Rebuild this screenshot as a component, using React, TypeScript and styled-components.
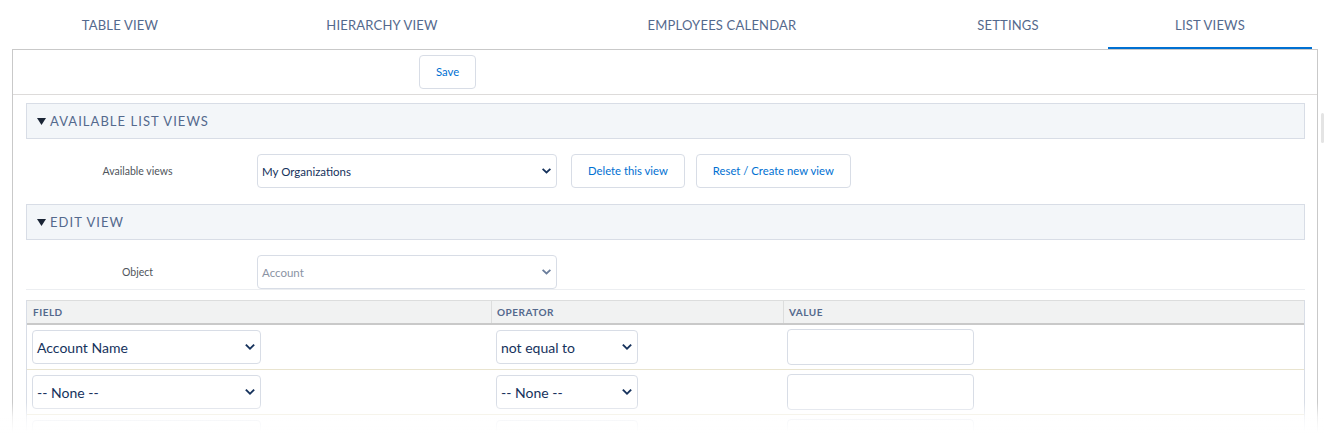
import React from "react";
import styled, { createGlobalStyle } from "styled-components";

const GlobalStyle = createGlobalStyle`
  html, body { margin: 0; padding: 0; overflow: hidden; background: #ffffff; }
  body { font-family: Lato, "Open Sans", "Liberation Sans", sans-serif; }
  * { box-sizing: border-box; }
`;

const Page = styled.div`
  width: 1324px;
  padding: 0 6px 0 12px;
`;

const TabBar = styled.nav`
  display: flex;
  height: 49px;
`;

const Tab = styled.div<{ $w: number; $active?: boolean }>`
  width: ${(p) => p.$w}px;
  height: 49px;
  padding-top: 16px;
  text-align: center;
  font-size: 13px;
  line-height: 18px;
  letter-spacing: 0.2px;
  text-transform: uppercase;
  color: #54698d;
  border-bottom: 2px solid ${(p) => (p.$active ? "#0070d2" : "transparent")};
`;

const Panel = styled.section`
  border: 1px solid #c9c9c9;
  border-bottom: none;
  width: 1306px;
`;

const SaveRow = styled.div`
  display: flex;
  padding: 5px 0 5px 406px;
  border-bottom: 1px solid #dddbda;
`;

const Button = styled.button`
  height: 34px;
  padding: 0 16px;
  border: 1px solid #d8dde6;
  border-radius: 4px;
  background: #ffffff;
  color: #0070d2;
  font-family: Lato, "Open Sans", sans-serif;
  font-size: 11.3px;
  line-height: 1;
  white-space: nowrap;
`;

const Content = styled.div`
  padding: 8px 12px 0 13px;
`;

const SectionHeader = styled.div`
  height: 36px;
  display: flex;
  align-items: center;
  gap: 4px;
  padding-left: 10px;
  background: #f3f6f9;
  border: 1px solid #d8dde6;
  font-size: 13px;
  letter-spacing: 1.05px;
  color: #54698d;
  text-transform: uppercase;
`;

const FormRow = styled.div<{ $bottom: number; $line?: boolean }>`
  display: flex;
  align-items: center;
  height: ${(p) => 49 + p.$bottom + (p.$line ? 1 : 0)}px;
  padding: 15px 0 ${(p) => p.$bottom}px 0;
  border-bottom: ${(p) => (p.$line ? "1px solid #eceef1" : "none")};
`;

const Label = styled.div`
  width: 223px;
  text-align: center;
  font-size: 10.5px;
  color: #50555c;
  margin-right: 8px;
`;

const FakeSelect = styled.div<{ $w: number; $size?: number; $muted?: boolean }>`
  width: ${(p) => p.$w}px;
  height: 34px;
  flex-shrink: 0;
  display: flex;
  align-items: center;
  justify-content: space-between;
  padding: 0 5px 0 4px;
  border: 1px solid #d8dde6;
  border-radius: 4px;
  background: #ffffff;
  font-size: ${(p) => p.$size ?? 11.5}px;
  color: ${(p) => (p.$muted ? "#8a93a3" : "#16325c")};
  white-space: nowrap;
`;

const ButtonGroup = styled.div`
  display: flex;
  gap: 11px;
  margin-left: 14px;
`;

const Table = styled.div`
  margin-top: 10px;
  border-left: 1px solid #d8dde6;
  border-right: 1px solid #d8dde6;
`;

const HeadRow = styled.div`
  display: grid;
  grid-template-columns: 464px 292px 1fr;
  height: 25px;
  background: #f1f2f2;
  border-top: 1px solid #dcdddd;
  border-bottom: 2px solid #c9c9c9;
`;

const HeadCell = styled.div<{ $divider?: boolean }>`
  display: flex;
  align-items: center;
  padding-left: 5px;
  font-size: 10px;
  font-weight: 700;
  letter-spacing: 0.5px;
  color: #54698d;
  border-left: 1px solid ${(p) => (p.$divider ? "#dcdddd" : "transparent")};
`;

const BodyRow = styled.div`
  display: grid;
  grid-template-columns: 464px 292px 1fr;
  height: 45px;
  border-bottom: 1px solid #e9e4cf;
`;

const Cell = styled.div<{ $pad?: number }>`
  display: flex;
  align-items: center;
  padding-left: ${(p) => p.$pad ?? 5}px;
`;

const ValueInput = styled.div`
  width: 187px;
  height: 36px;
  border: 1px solid #d8dde6;
  border-radius: 4px;
  background: #ffffff;
`;

const Fade = styled.div`
  position: fixed;
  left: 0;
  right: 0;
  bottom: 0;
  height: 34px;
  background: linear-gradient(to bottom, rgba(255, 255, 255, 0) 0%, rgba(255, 255, 255, 0.72) 45%, #ffffff 90%);
  pointer-events: none;
`;

const ScrollThumb = styled.div`
  position: fixed;
  right: 0;
  top: 113px;
  width: 3px;
  height: 30px;
  border-radius: 2px;
  background: #e4e4e4;
`;

const Chevron = ({ w = 9, color = "#16325c" }: { w?: number; color?: string }) => (
  <svg width={w} height={Math.round(w * 0.62)} viewBox="0 0 10 6.2" aria-hidden>
    <path d="M0 1.4 L1.4 0 L5 3.5 L8.6 0 L10 1.4 L5 6.2 Z" fill={color} />
  </svg>
);

const Triangle = () => (
  <svg width="9" height="7" viewBox="0 0 9 7" aria-hidden>
    <path d="M0 0 H9 L4.5 7 Z" fill="#1b2536" />
  </svg>
);

const tabs = [
  { label: "Table View", w: 216 },
  { label: "Hierarchy View", w: 308 },
  { label: "Employees Calendar", w: 372 },
  { label: "Settings", w: 200 },
  { label: "List Views", w: 204, active: true },
];

const rows = [
  { field: "Account Name", op: "not equal to" },
  { field: "-- None --", op: "-- None --" },
  { field: "", op: "" },
];

export default function App() {
  return (
    <Page>
      <GlobalStyle />
      <TabBar>
        {tabs.map((t) => (
          <Tab key={t.label} $w={t.w} $active={t.active}>
            {t.label}
          </Tab>
        ))}
      </TabBar>
      <Panel>
        <SaveRow>
          <Button>Save</Button>
        </SaveRow>
        <Content>
          <SectionHeader>
            <Triangle />
            Available List Views
          </SectionHeader>
          <FormRow $bottom={16}>
            <Label>Available views</Label>
            <FakeSelect $w={300}>
              My Organizations
              <Chevron />
            </FakeSelect>
            <ButtonGroup>
              <Button>Delete this view</Button>
              <Button>Reset / Create new view</Button>
            </ButtonGroup>
          </FormRow>
          <SectionHeader>
            <Triangle />
            Edit View
          </SectionHeader>
          <FormRow $bottom={0} $line>
            <Label>Object</Label>
            <FakeSelect $w={300} $muted>
              Account
              <Chevron color="#6a7d9b" />
            </FakeSelect>
          </FormRow>
          <Table>
            <HeadRow>
              <HeadCell>FIELD</HeadCell>
              <HeadCell $divider>OPERATOR</HeadCell>
              <HeadCell $divider>VALUE</HeadCell>
            </HeadRow>
            {rows.map((r, i) => (
              <BodyRow key={i}>
                <Cell>
                  <FakeSelect $w={229} $size={14}>
                    {r.field}
                    <Chevron w={10} />
                  </FakeSelect>
                </Cell>
                <Cell>
                  <FakeSelect $w={142} $size={14}>
                    {r.op}
                    <Chevron w={10} />
                  </FakeSelect>
                </Cell>
                <Cell $pad={4}>
                  <ValueInput />
                </Cell>
              </BodyRow>
            ))}
          </Table>
        </Content>
      </Panel>
      <ScrollThumb />
      <Fade />
    </Page>
  );
}
